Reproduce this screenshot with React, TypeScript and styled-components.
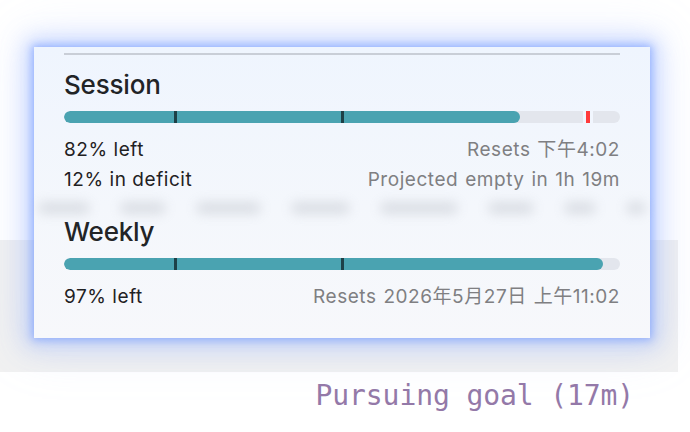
import React from 'react';
import styled, { createGlobalStyle } from 'styled-components';

const GlobalStyle = createGlobalStyle`
  html, body {
    margin: 0;
    padding: 0;
    background: #ffffff;
  }
  body {
    width: 690px;
    height: 432px;
    overflow: hidden;
    font-family: Inter, "Noto Sans", "Noto Sans CJK SC", sans-serif;
  }
`;

const Page = styled.div`
  position: relative;
  width: 690px;
  height: 432px;
  display: flex;
  flex-direction: column;
`;

const Band = styled.div`
  margin-top: 240px;
  width: 678px;
  height: 132px;
  background: #f1f1f1;
`;

const Status = styled.div`
  align-self: flex-end;
  margin: 7px 56px 0 0;
  font-family: "DejaVu Sans Mono", "Liberation Mono", monospace;
  font-size: 28px;
  line-height: 34px;
  letter-spacing: -0.1px;
  color: #9479a8;
`;

const Popover = styled.div`
  position: absolute;
  top: 47px;
  left: 34px;
  width: 616px;
  height: 291px;
  box-sizing: border-box;
  padding: 6px 30px 0;
  background: linear-gradient(180deg, #eff5fe 0%, #f4f7fc 55%, #f7f8fb 100%);
  box-shadow: 0 0 8px 2px rgba(110, 150, 255, 0.6),
    0 0 22px 8px rgba(130, 165, 255, 0.4),
    0 0 50px 10px rgba(160, 185, 255, 0.18);
  display: flex;
  flex-direction: column;
`;

const Divider = styled.div`
  height: 2px;
  background: #c9ced7;
`;

const Section = styled.div<{ $top: number }>`
  margin-top: ${(p) => p.$top}px;
  display: flex;
  flex-direction: column;
`;

const Title = styled.div`
  font-size: 26px;
  line-height: 32px;
  font-weight: 500;
  color: #222426;
  letter-spacing: -0.2px;
`;

const Track = styled.div`
  position: relative;
  margin: 10px 0 12px;
  height: 12px;
  border-radius: 6px;
  background: #e3e6ed;
  overflow: hidden;
`;

const Fill = styled.div`
  height: 100%;
  border-radius: 6px;
  background: #4aa3b1;
`;

const Tick = styled.div`
  position: absolute;
  top: 0;
  bottom: 0;
  width: 3px;
  margin-left: -1px;
  background: #1d4047;
`;

const Deficit = styled.div`
  position: absolute;
  top: 0;
  bottom: 0;
  width: 4px;
  background: #ff3b3b;
  border-left: 3px solid #f1f6fe;
  border-right: 3px solid #f1f6fe;
`;

const Row = styled.div`
  display: flex;
  justify-content: space-between;
  font-size: 19px;
  line-height: 30px;
  letter-spacing: 0.55px;
`;

const Left = styled.span`
  color: #1f2123;
`;

const Right = styled.span`
  color: #7f7f82;
  word-spacing: 1px;
`;

const Ghost = styled.div`
  margin: 6px -26px 0;
  height: 14px;
  display: flex;
  align-items: center;
  gap: 30px;
  filter: blur(6px);
  opacity: 0.3;
`;

const GhostBlob = styled.span<{ $w: number }>`
  width: ${(p) => p.$w}px;
  height: 12px;
  border-radius: 6px;
  background: #9ea3ad;
`;

type Usage = {
  title: string;
  used: number;
  deficit?: number;
  rows: [string, string][];
};

const ticks = [20, 50];

const UsageBlock: React.FC<{ usage: Usage; top: number }> = ({ usage, top }) => (
  <Section $top={top}>
    <Title>{usage.title}</Title>
    <Track>
      <Fill style={{ width: `${usage.used}%` }} />
      {ticks.map((t) => (
        <Tick key={t} style={{ left: `${t}%` }} />
      ))}
      {usage.deficit !== undefined && (
        <Deficit style={{ left: `calc(${usage.deficit}% - 5px)` }} />
      )}
    </Track>
    {usage.rows.map(([l, r]) => (
      <Row key={l}>
        <Left>{l}</Left>
        <Right>{r}</Right>
      </Row>
    ))}
  </Section>
);

const session: Usage = {
  title: 'Session',
  used: 82,
  deficit: 94.2,
  rows: [
    ['82% left', 'Resets 下午4:02'],
    ['12% in deficit', 'Projected empty in 1h 19m'],
  ],
};

const weekly: Usage = {
  title: 'Weekly',
  used: 97,
  rows: [['97% left', 'Resets 2026年5月27日 上午11:02']],
};

const App: React.FC = () => (
  <>
    <GlobalStyle />
    <Page>
      <Band />
      <Status>Pursuing goal (17m)</Status>
      <Popover>
        <Divider />
        <UsageBlock usage={session} top={14} />
        <Ghost>
          {[80, 70, 100, 90, 120, 70, 50, 30].map((w, i) => (
            <GhostBlob key={i} $w={w} />
          ))}
        </Ghost>
        <UsageBlock usage={weekly} top={1} />
      </Popover>
    </Page>
  </>
);

export default App;
